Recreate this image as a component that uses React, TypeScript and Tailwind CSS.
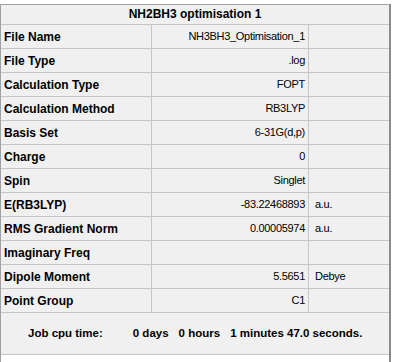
const rows: [string, string, string][] = [
  ["File Name", "NH3BH3_Optimisation_1", ""],
  ["File Type", ".log", ""],
  ["Calculation Type", "FOPT", ""],
  ["Calculation Method", "RB3LYP", ""],
  ["Basis Set", "6-31G(d,p)", ""],
  ["Charge", "0", ""],
  ["Spin", "Singlet", ""],
  ["E(RB3LYP)", "-83.22468893", "a.u."],
  ["RMS Gradient Norm", "0.00005974", "a.u."],
  ["Imaginary Freq", "", ""],
  ["Dipole Moment", "5.5651", "Debye"],
  ["Point Group", "C1", ""],
];

export default function App() {
  return (
    <div
      className="w-[394px] h-[362px] bg-white pt-[4px] text-black text-[11px] overflow-hidden"
      style={{ fontFamily: '"Liberation Sans", Arial, sans-serif' }}
    >
      <div className="w-[391px] h-[358px] flex flex-col border-t border-l border-t-[#a0a0a0] border-l-[#a0a0a0] border-r-2 border-r-[#8a8a8a]">
        <div className="bg-[#f0f0f0]">
          <div className="h-[20px] flex items-center justify-center font-bold text-[12px] border-b border-[#c6c6c6] pb-[1px]">
            NH2BH3 optimisation 1
          </div>
          {rows.map(([label, value, unit]) => (
            <div key={label} className="h-[24px] flex border-b border-[#c6c6c6]">
              <div className="w-[151px] flex items-center pl-[3px] font-bold text-[12px] border-r border-[#c6c6c6]">
                {label}
              </div>
              <div className="w-[157px] flex items-center justify-end pr-[3px] tracking-[-0.3px] border-r border-[#c6c6c6]">
                {value}
              </div>
              <div className="flex-1 flex items-center pl-[6px] tracking-[-0.3px]">{unit}</div>
            </div>
          ))}
          <div className="h-[42px] flex items-center pl-[27px] font-bold text-[11.5px] border-b border-[#c6c6c6]">
            <span>Job cpu time:</span>
            <span className="ml-[30px]">0 days</span>
            <span className="ml-[10px]">0 hours</span>
            <span className="ml-[10px]">1 minutes 47.0 seconds.</span>
          </div>
        </div>
        <div className="flex-1 bg-white" />
      </div>
    </div>
  );
}
